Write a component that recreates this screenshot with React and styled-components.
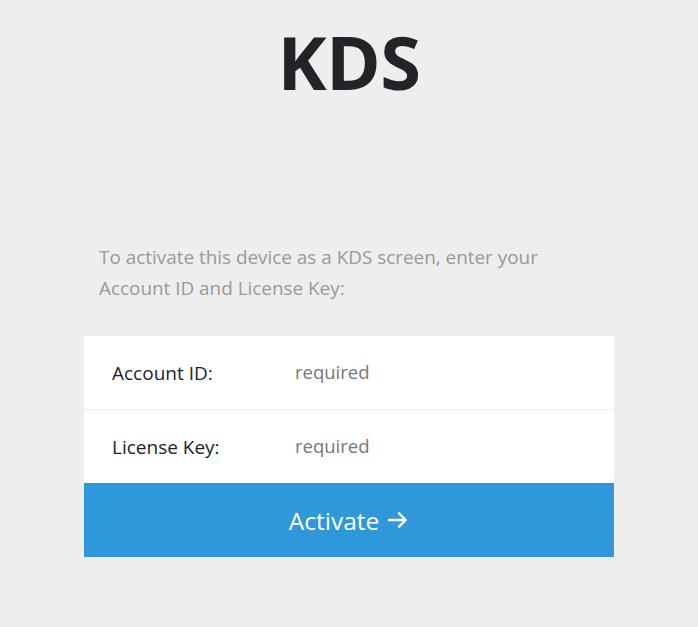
import React from "react";
import styled, { createGlobalStyle } from "styled-components";

const Global = createGlobalStyle`
  html, body { margin: 0; padding: 0; background: #eeeeee; }
  body { font-family: "Open Sans", "Noto Sans", sans-serif; }
  * { box-sizing: border-box; }
`;

const Page = styled.div`
  min-height: 627px;
  display: flex;
  flex-direction: column;
  align-items: center;
  background: #eeeeee;
`;

const Title = styled.h1`
  margin: 20px 0 0;
  font-size: 74px;
  line-height: 84px;
  font-weight: 700;
  color: #212529;
  letter-spacing: -0.5px;
`;

const Form = styled.div`
  width: 530px;
  margin-top: 138px;
  display: flex;
  flex-direction: column;
`;

const Intro = styled.p`
  margin: 0 0 32px;
  padding: 0 15px;
  max-width: 500px;
  font-size: 18.9px;
  line-height: 31px;
  color: #999999;
`;

const Field = styled.label`
  box-sizing: content-box;
  display: flex;
  align-items: center;
  height: 73px;
  padding: 0 28px;
  background: #ffffff;
  border-bottom: ${(p) => (p.$last ? "none" : "1px solid #eeeeee")};
`;

const Label = styled.span`
  width: 183px;
  font-size: 19px;
  color: #1c1e2e;
  padding-top: 1px;
`;

const Input = styled.input`
  flex: 1;
  border: none;
  outline: none;
  background: transparent;
  font-family: inherit;
  font-size: 18.5px;
  color: #333;
  padding: 0;
  margin-top: -2px;
  &::placeholder { color: #777777; opacity: 1; }
`;

const Button = styled.button`
  height: 74px;
  border: none;
  background: #2f98db;
  color: #ffffff;
  font-family: inherit;
  font-size: 24.5px;
  display: flex;
  align-items: center;
  justify-content: center;
  gap: 8px;
  cursor: pointer;
`;

export default function App() {
  return (
    <Page>
      <Global />
      <Title>KDS</Title>
      <Form>
        <Intro>
          To activate this device as a KDS screen, enter your Account ID and License Key:
        </Intro>
        <Field>
          <Label>Account ID:</Label>
          <Input placeholder="required" />
        </Field>
        <Field $last>
          <Label>License Key:</Label>
          <Input placeholder="required" />
        </Field>
        <Button>
          Activate
          <svg width="22" height="22" viewBox="0 0 20 20" fill="none" stroke="#fff" strokeWidth="2.2" strokeLinecap="round" strokeLinejoin="round">
            <path d="M2 10h15M11 4l6 6-6 6" />
          </svg>
        </Button>
      </Form>
    </Page>
  );
}
